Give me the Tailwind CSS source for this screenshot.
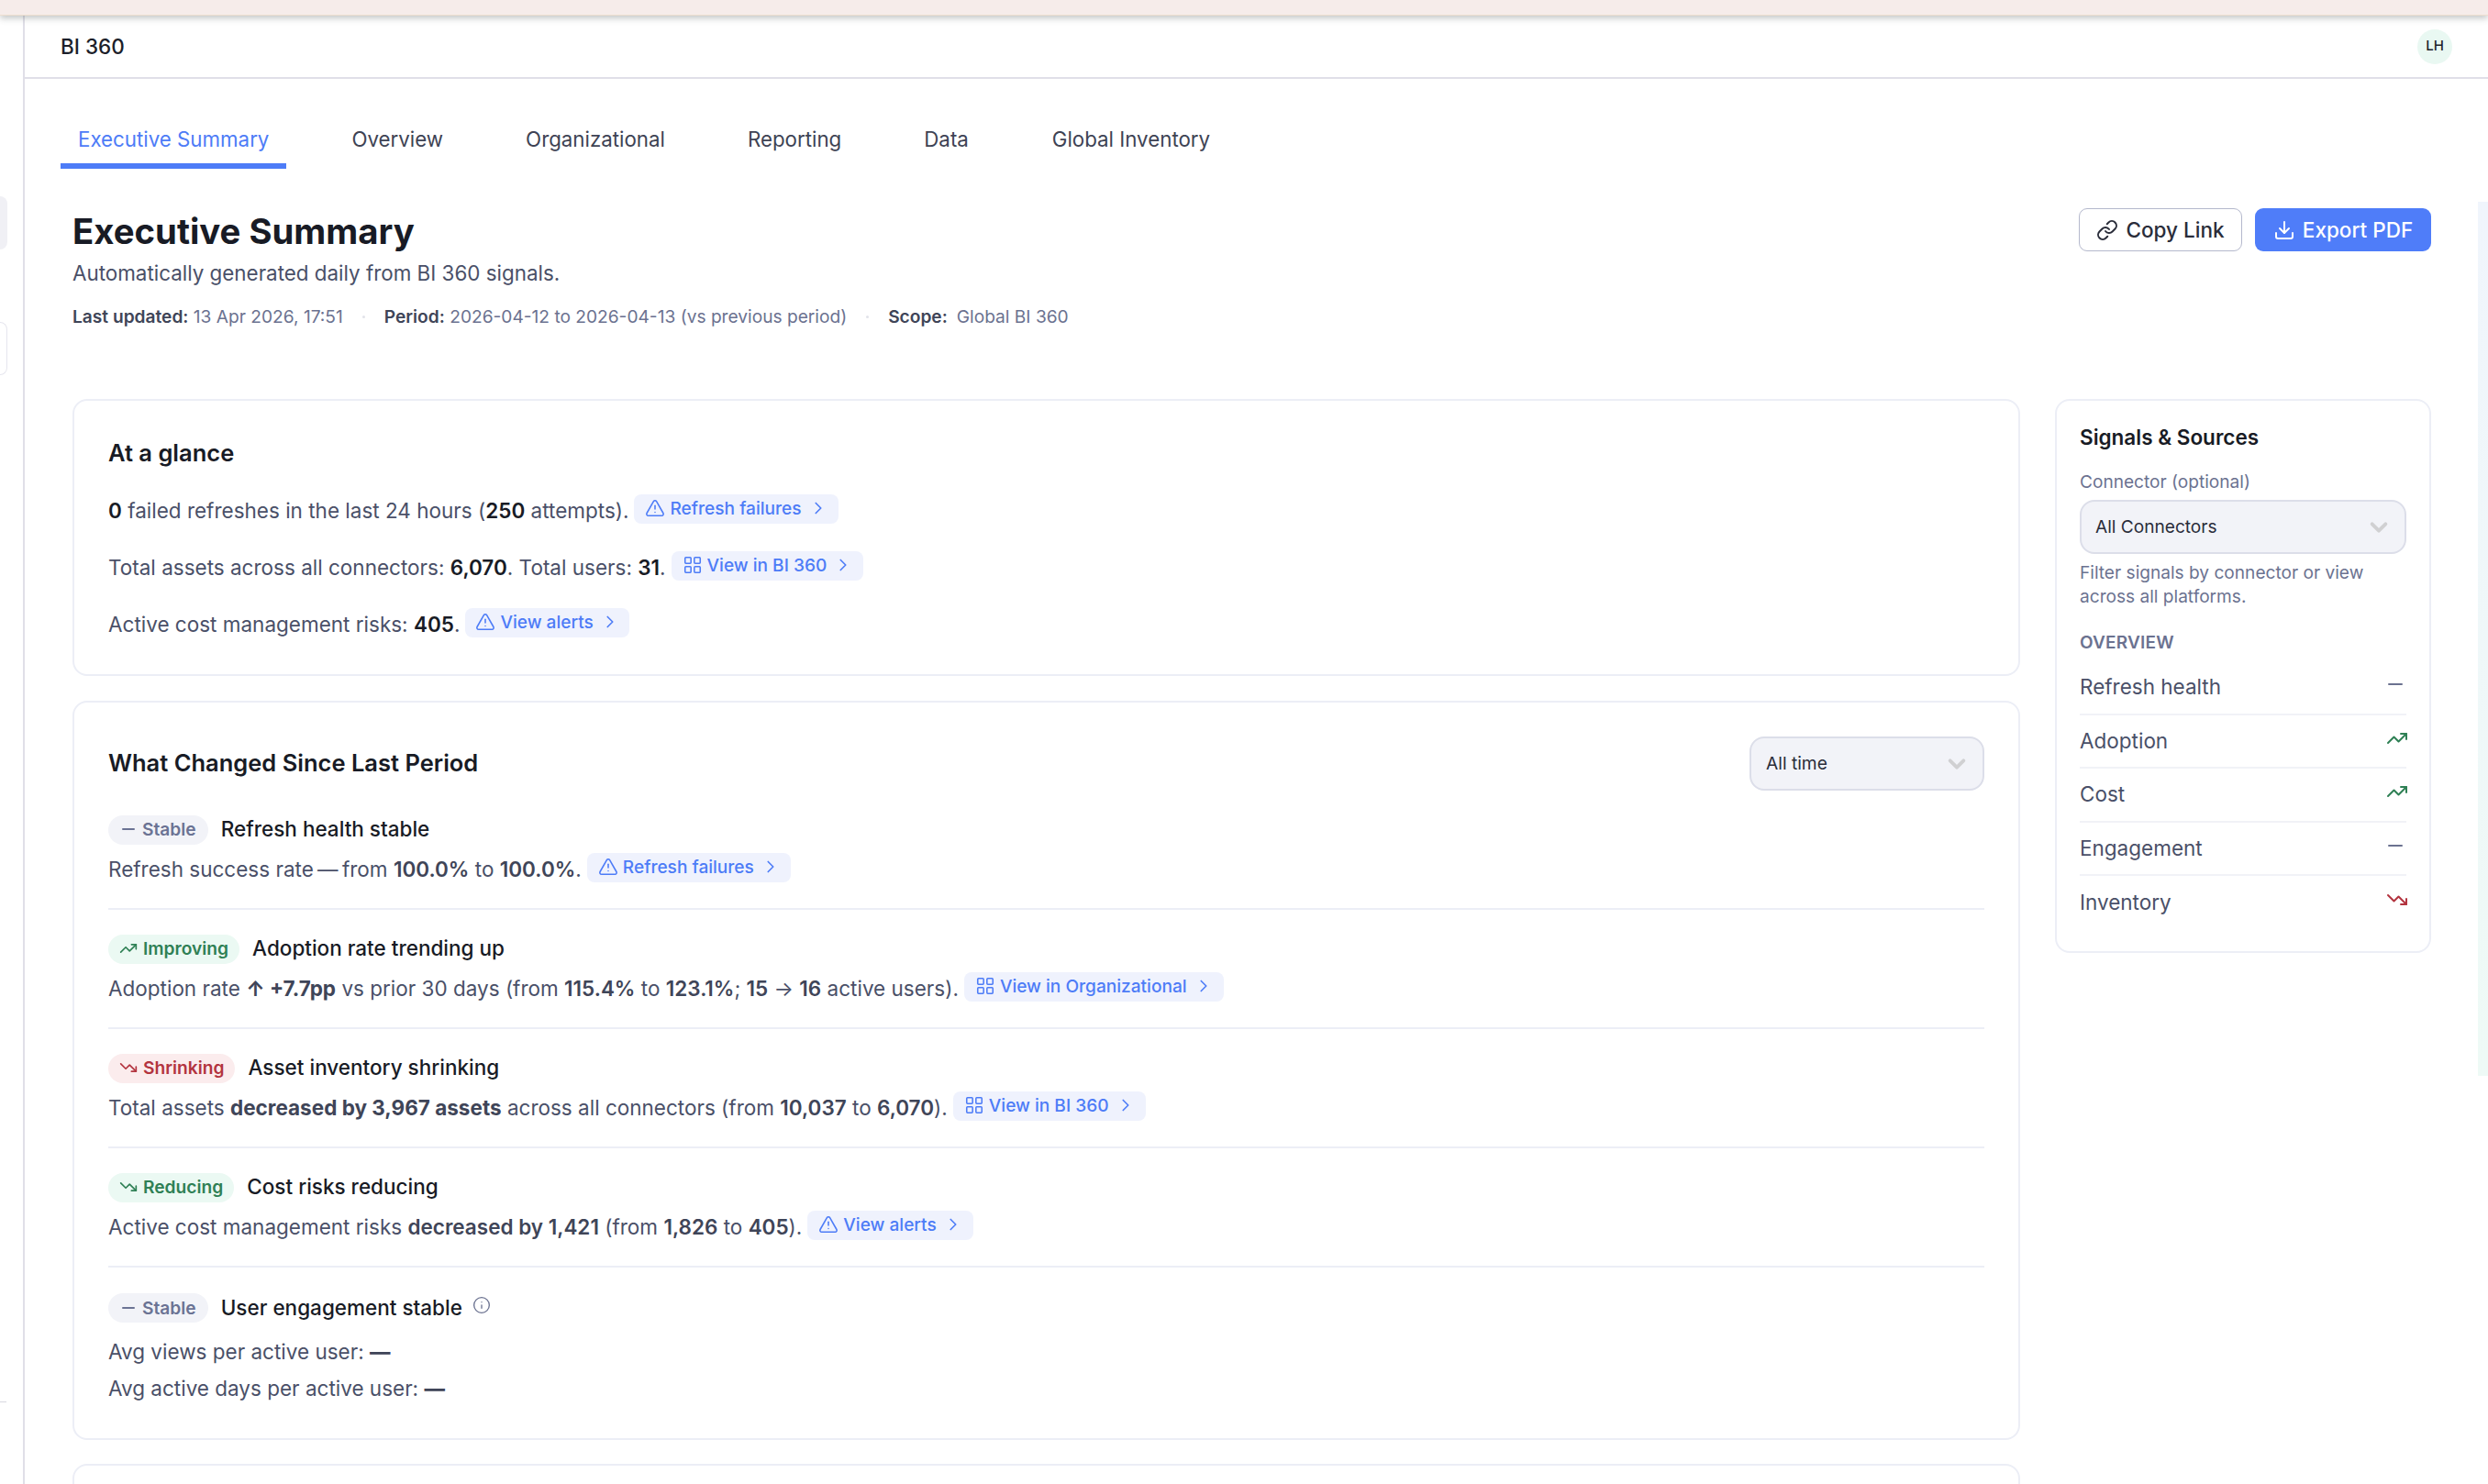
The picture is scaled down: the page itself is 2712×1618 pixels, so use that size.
<!DOCTYPE html>
<html lang="en">

<head>
    <meta charset="UTF-8">
    <meta name="viewport" content="width=device-width, initial-scale=1.0">
    <script src="https://cdn.jsdelivr.net/npm/@tailwindcss/browser@4"></script>
    <title>BI 360 - Executive Summary</title>
</head>

<body class="relative h-[1618px] overflow-hidden bg-white font-[Inter,sans-serif] text-[#4a5068] antialiased">

    <!-- Browser strip -->
    <div class="relative z-10 h-[17px] border-b border-[#eedfd0] bg-[#f6ecea] shadow-[0_3px_7px_rgba(60,70,70,0.3)]"></div>

    <div class="flex">
        <!-- Collapsed rail -->
        <aside class="h-[1601px] w-[27px] shrink-0 border-r-2 border-[#e0dfe8]">
            <div class="mt-[197px] h-[58px] w-[8px] rounded-r-[8px] bg-[#f0f0f5]"></div>
            <div class="mt-[79px] h-[58px] w-[8px] rounded-r-[8px] border border-l-0 border-[#e6e6ee]"></div>
            <div class="mt-[1119px] h-[1px] w-[7px] bg-[#d8d8e0]"></div>
        </aside>

        <div class="min-w-0 flex-1">
            <header class="flex h-[69px] items-center justify-between border-b-2 border-[#e0dfe8] pr-[39px] pl-[39px]">
                <span class="text-[22.5px] font-medium text-[#1c1f2a]">BI 360</span>
                <span class="flex h-[38px] w-[38px] items-center justify-center rounded-full bg-[#e9f8f2] text-[15px] font-medium text-[#1c1f2a]">LH</span>
            </header>

            <!-- Tabs -->
            <nav class="mt-[39px] flex gap-[52px] pl-[39px] text-[22.3px] text-[#3e4354]">
                <a class="h-[59px] border-b-[6px] border-[#4d7cf7] px-[19px] pt-[11px] leading-[32px] text-[#4d7cf7]">Executive Summary</a>
                <a class="h-[59px] px-[19px] pt-[11px] leading-[32px]">Overview</a>
                <a class="h-[59px] px-[19px] pt-[11px] leading-[32px]">Organizational</a>
                <a class="h-[59px] px-[19px] pt-[11px] leading-[32px]">Reporting</a>
                <a class="h-[59px] px-[19px] pt-[11px] leading-[32px]">Data</a>
                <a class="ml-[1px] h-[59px] px-[19px] pt-[11px] leading-[32px]">Global Inventory</a>
            </nav>

            <div class="pr-[62px] pl-[52px]">
                <!-- Page title -->
                <section class="mt-[43px] flex items-start justify-between">
                    <div>
                        <h1 class="mt-[1px] text-[38.3px] leading-[48px] font-bold text-[#181b25]">Executive Summary</h1>
                        <p class="mt-[4px] text-[22.4px] leading-[36px]">Automatically generated daily from BI 360 signals.</p>
                        <div class="mt-[14px] flex items-center gap-[21px] text-[19.15px] leading-[30px] text-[#6b7290]">
                            <span><b class="font-semibold text-[#3f4558]">Last updated:</b> 13 Apr 2026, 17:51</span>
                            <span class="h-[3px] w-[3px] rounded-full bg-[#e2e3ea]"></span>
                            <span><b class="font-semibold text-[#3f4558]">Period:</b> 2026-04-12 to 2026-04-13 (vs previous period)</span>
                            <span class="h-[3px] w-[3px] rounded-full bg-[#e2e3ea]"></span>
                            <span class="flex gap-[10px]"><b class="font-semibold text-[#3f4558]">Scope:</b> Global BI 360</span>
                        </div>
                    </div>
                    <div class="flex gap-[14px]">
                        <button class="flex h-[47px] w-[178px] items-center justify-center gap-[8px] rounded-[9px] border-[1.5px] border-[#b4b8cc] bg-white text-[22.5px] font-medium text-[#2a2d3a]">
                            <svg class="h-[24px] w-[24px]" viewBox="0 0 24 24" fill="none" stroke="currentColor" stroke-width="2" stroke-linecap="round" stroke-linejoin="round"><path d="M10 13a5 5 0 0 0 7.54.54l3-3a5 5 0 0 0-7.07-7.07l-1.72 1.71"/><path d="M14 11a5 5 0 0 0-7.54-.54l-3 3a5 5 0 0 0 7.07 7.07l1.71-1.71"/></svg>
                            Copy Link
                        </button>
                        <button class="flex h-[47px] w-[192px] items-center justify-center gap-[8px] rounded-[9px] bg-[#4f7df9] text-[22.5px] font-medium text-white">
                            <svg class="h-[24px] w-[24px]" viewBox="0 0 24 24" fill="none" stroke="currentColor" stroke-width="2" stroke-linecap="round" stroke-linejoin="round"><path d="M21 15v4a2 2 0 0 1-2 2H5a2 2 0 0 1-2-2v-4"/><polyline points="7 10 12 15 17 10"/><line x1="12" y1="15" x2="12" y2="3"/></svg>
                            Export PDF
                        </button>
                    </div>
                </section>

                <div class="mt-[75px] flex items-start gap-[38px]">
                    <main class="w-[2123px] shrink-0">
                        <!-- At a glance -->
                        <section class="rounded-[16px] border-2 border-[#eceef6] px-[37px] pt-[37px] pb-[36px]">
                            <h2 class="text-[25.5px] leading-[40px] font-semibold text-[#181b25]">At a glance</h2>
                            <div class="mt-[25px] flex flex-col gap-[26px] text-[22.5px]">
                                <div class="flex h-[36px] items-center gap-[6px]">
                                    <span><b class="font-semibold text-[#181b25]">0</b> failed refreshes in the last 24 hours (<b class="font-semibold text-[#181b25]">250</b> attempts).</span>
                                    <a class="mb-[4px] flex h-[32px] items-center gap-[5px] rounded-[8px] bg-[#eff2fd] pr-[11px] pb-[2px] pl-[12px] text-[19.1px] font-medium text-[#4d7cf7]">
                                        <svg class="h-[22px] w-[22px]" viewBox="0 0 24 24" fill="none" stroke="currentColor" stroke-width="1.7" stroke-linecap="round" stroke-linejoin="round"><path d="m21.73 18-8-14a2 2 0 0 0-3.48 0l-8 14A2 2 0 0 0 4 21h16a2 2 0 0 0 1.73-3"/><path d="M12 9v4"/><path d="M12 17h.01"/></svg>
                                        Refresh failures
                                        <svg class="ml-[2px] h-[22px] w-[22px]" viewBox="0 0 24 24" fill="none" stroke="currentColor" stroke-width="1.8" stroke-linecap="round" stroke-linejoin="round"><path d="m9 18 6-6-6-6"/></svg>
                                    </a>
                                </div>
                                <div class="flex h-[36px] items-center gap-[6px]">
                                    <span>Total assets across all connectors: <b class="font-semibold text-[#181b25]">6,070</b>. Total users: <b class="font-semibold text-[#181b25]">31</b>.</span>
                                    <a class="mb-[4px] flex h-[32px] items-center gap-[5px] rounded-[8px] bg-[#eff2fd] pr-[11px] pb-[2px] pl-[12px] text-[19.1px] font-medium text-[#4d7cf7]">
                                        <svg class="h-[22px] w-[22px]" viewBox="0 0 24 24" fill="none" stroke="currentColor" stroke-width="1.7" stroke-linecap="round" stroke-linejoin="round"><rect x="3" y="3" width="7" height="7" rx="1"/><rect x="14" y="3" width="7" height="7" rx="1"/><rect x="14" y="14" width="7" height="7" rx="1"/><rect x="3" y="14" width="7" height="7" rx="1"/></svg>
                                        View in BI 360
                                        <svg class="ml-[2px] h-[22px] w-[22px]" viewBox="0 0 24 24" fill="none" stroke="currentColor" stroke-width="1.8" stroke-linecap="round" stroke-linejoin="round"><path d="m9 18 6-6-6-6"/></svg>
                                    </a>
                                </div>
                                <div class="flex h-[36px] items-center gap-[6px]">
                                    <span>Active cost management risks: <b class="font-semibold text-[#181b25]">405</b>.</span>
                                    <a class="mb-[4px] flex h-[32px] items-center gap-[5px] rounded-[8px] bg-[#eff2fd] pr-[10px] pb-[2px] pl-[11px] text-[19.1px] font-medium text-[#4d7cf7]">
                                        <svg class="h-[22px] w-[22px]" viewBox="0 0 24 24" fill="none" stroke="currentColor" stroke-width="1.7" stroke-linecap="round" stroke-linejoin="round"><path d="m21.73 18-8-14a2 2 0 0 0-3.48 0l-8 14A2 2 0 0 0 4 21h16a2 2 0 0 0 1.73-3"/><path d="M12 9v4"/><path d="M12 17h.01"/></svg>
                                        View alerts
                                        <svg class="ml-[2px] h-[22px] w-[22px]" viewBox="0 0 24 24" fill="none" stroke="currentColor" stroke-width="1.8" stroke-linecap="round" stroke-linejoin="round"><path d="m9 18 6-6-6-6"/></svg>
                                    </a>
                                </div>
                            </div>
                        </section>

                        <!-- What changed -->
                        <section class="mt-[27px] rounded-[16px] border-2 border-[#eceef6] px-[37px] pt-[37px] pb-[34px] text-[22.5px]">
                            <div class="flex h-[59px] items-center justify-between">
                                <h2 class="text-[25.5px] font-semibold text-[#181b25]">What Changed Since Last Period</h2>
                                <div class="flex h-[59px] w-[256px] items-center justify-between rounded-[16px] border-2 border-[#dcdee9] bg-[#f2f3f8] pr-[17px] pl-[16px] text-[19.2px] text-[#2a2d3a]">
                                    All time
                                    <svg class="h-[22px] w-[22px] text-[#d0d0d2]" viewBox="0 0 24 24" fill="none" stroke="currentColor" stroke-width="4.2" stroke-linecap="round" stroke-linejoin="round"><path d="M4 8 12 16 20 8"/></svg>
                                </div>
                            </div>

                            <!-- Refresh -->
                            <div class="mt-[27px] border-b-2 border-[#eceef6] pb-[24px]">
                                <div class="flex h-[32px] items-center gap-[14px]">
                                    <span class="flex h-[32px] items-center gap-[8px] rounded-full bg-[#f2f3f8] pr-[13px] pb-[2px] pl-[15px] text-[19.2px] font-semibold text-[#6b7394]">
                                        <svg class="h-[14px] w-[14px]" viewBox="0 0 14 14" fill="none" stroke="currentColor" stroke-width="2" stroke-linecap="round"><path d="M1 7h12"/></svg>
                                        Stable
                                    </span>
                                    <span class="mb-[2px] font-medium text-[#181b25]">Refresh health stable</span>
                                </div>
                                <div class="mt-[9px] flex h-[36px] items-center gap-[6px]">
                                    <span>Refresh success rate <span class="-mx-[2px]">—</span> from <b class="font-semibold text-[#3f4558]">100.0%</b> to <b class="font-semibold text-[#3f4558]">100.0%</b>.</span>
                                    <a class="mb-[4px] flex h-[32px] items-center gap-[5px] rounded-[8px] bg-[#eff2fd] pr-[11px] pb-[2px] pl-[12px] text-[19.1px] font-medium text-[#4d7cf7]">
                                        <svg class="h-[22px] w-[22px]" viewBox="0 0 24 24" fill="none" stroke="currentColor" stroke-width="1.7" stroke-linecap="round" stroke-linejoin="round"><path d="m21.73 18-8-14a2 2 0 0 0-3.48 0l-8 14A2 2 0 0 0 4 21h16a2 2 0 0 0 1.73-3"/><path d="M12 9v4"/><path d="M12 17h.01"/></svg>
                                        Refresh failures
                                        <svg class="ml-[2px] h-[22px] w-[22px]" viewBox="0 0 24 24" fill="none" stroke="currentColor" stroke-width="1.8" stroke-linecap="round" stroke-linejoin="round"><path d="m9 18 6-6-6-6"/></svg>
                                    </a>
                                </div>
                            </div>

                            <!-- Adoption -->
                            <div class="mt-[27px] border-b-2 border-[#eceef6] pb-[24px]">
                                <div class="flex h-[32px] items-center gap-[14px]">
                                    <span class="flex h-[32px] items-center gap-[6px] rounded-full bg-[#ebf9f3] pr-[12px] pb-[2px] pl-[12px] text-[19.2px] font-semibold text-[#2f8055]">
                                        <svg class="h-[20px] w-[20px]" viewBox="0 0 24 24" fill="none" stroke="currentColor" stroke-width="2" stroke-linecap="round" stroke-linejoin="round"><polyline points="22 7 13.5 15.5 8.5 10.5 2 17"/><polyline points="16 7 22 7 22 13"/></svg>
                                        Improving
                                    </span>
                                    <span class="mb-[2px] font-medium text-[#181b25]">Adoption rate trending up</span>
                                </div>
                                <div class="mt-[9px] flex h-[36px] items-center gap-[6px]">
                                    <span>Adoption rate <b class="font-bold text-[#3f4558]">↑ +7.7pp</b> vs prior 30 days (from <b class="font-semibold text-[#3f4558]">115.4%</b> to <b class="font-semibold text-[#3f4558]">123.1%</b>; <b class="font-semibold text-[#3f4558]">15</b> → <b class="font-semibold text-[#3f4558]">16</b> active users).</span>
                                    <a class="mb-[4px] flex h-[32px] items-center gap-[5px] rounded-[8px] bg-[#eff2fd] pr-[11px] pb-[2px] pl-[12px] text-[19.1px] font-medium text-[#4d7cf7]">
                                        <svg class="h-[22px] w-[22px]" viewBox="0 0 24 24" fill="none" stroke="currentColor" stroke-width="1.7" stroke-linecap="round" stroke-linejoin="round"><rect x="3" y="3" width="7" height="7" rx="1"/><rect x="14" y="3" width="7" height="7" rx="1"/><rect x="14" y="14" width="7" height="7" rx="1"/><rect x="3" y="14" width="7" height="7" rx="1"/></svg>
                                        View in Organizational
                                        <svg class="ml-[2px] h-[22px] w-[22px]" viewBox="0 0 24 24" fill="none" stroke="currentColor" stroke-width="1.8" stroke-linecap="round" stroke-linejoin="round"><path d="m9 18 6-6-6-6"/></svg>
                                    </a>
                                </div>
                            </div>

                            <!-- Inventory -->
                            <div class="mt-[27px] border-b-2 border-[#eceef6] pb-[24px]">
                                <div class="flex h-[32px] items-center gap-[14px]">
                                    <span class="flex h-[32px] items-center gap-[6px] rounded-full bg-[#fbeced] pr-[12px] pb-[2px] pl-[12px] text-[19.2px] font-semibold text-[#b3343f]">
                                        <svg class="h-[20px] w-[20px]" viewBox="0 0 24 24" fill="none" stroke="currentColor" stroke-width="2" stroke-linecap="round" stroke-linejoin="round"><polyline points="22 17 13.5 8.5 8.5 13.5 2 7"/><polyline points="16 17 22 17 22 11"/></svg>
                                        Shrinking
                                    </span>
                                    <span class="mb-[2px] font-medium text-[#181b25]">Asset inventory shrinking</span>
                                </div>
                                <div class="mt-[9px] flex h-[36px] items-center gap-[6px]">
                                    <span>Total assets <b class="font-bold text-[#3f4558]">decreased by 3,967 assets</b> across all connectors (from <b class="font-semibold text-[#3f4558]">10,037</b> to <b class="font-semibold text-[#3f4558]">6,070</b>).</span>
                                    <a class="mb-[4px] flex h-[32px] items-center gap-[5px] rounded-[8px] bg-[#eff2fd] pr-[11px] pb-[2px] pl-[12px] text-[19.1px] font-medium text-[#4d7cf7]">
                                        <svg class="h-[22px] w-[22px]" viewBox="0 0 24 24" fill="none" stroke="currentColor" stroke-width="1.7" stroke-linecap="round" stroke-linejoin="round"><rect x="3" y="3" width="7" height="7" rx="1"/><rect x="14" y="3" width="7" height="7" rx="1"/><rect x="14" y="14" width="7" height="7" rx="1"/><rect x="3" y="14" width="7" height="7" rx="1"/></svg>
                                        View in BI 360
                                        <svg class="ml-[2px] h-[22px] w-[22px]" viewBox="0 0 24 24" fill="none" stroke="currentColor" stroke-width="1.8" stroke-linecap="round" stroke-linejoin="round"><path d="m9 18 6-6-6-6"/></svg>
                                    </a>
                                </div>
                            </div>

                            <!-- Cost -->
                            <div class="mt-[27px] border-b-2 border-[#eceef6] pb-[24px]">
                                <div class="flex h-[32px] items-center gap-[14px]">
                                    <span class="flex h-[32px] items-center gap-[6px] rounded-full bg-[#ebf9f3] pr-[12px] pb-[2px] pl-[12px] text-[19.2px] font-semibold text-[#2f8055]">
                                        <svg class="h-[20px] w-[20px]" viewBox="0 0 24 24" fill="none" stroke="currentColor" stroke-width="2" stroke-linecap="round" stroke-linejoin="round"><polyline points="22 17 13.5 8.5 8.5 13.5 2 7"/><polyline points="16 17 22 17 22 11"/></svg>
                                        Reducing
                                    </span>
                                    <span class="mb-[2px] font-medium text-[#181b25]">Cost risks reducing</span>
                                </div>
                                <div class="mt-[9px] flex h-[36px] items-center gap-[6px]">
                                    <span>Active cost management risks <b class="font-semibold text-[#3f4558]">decreased by 1,421</b> (from <b class="font-semibold text-[#3f4558]">1,826</b> to <b class="font-semibold text-[#3f4558]">405</b>).</span>
                                    <a class="mb-[4px] flex h-[32px] items-center gap-[5px] rounded-[8px] bg-[#eff2fd] pr-[11px] pb-[2px] pl-[12px] text-[19.1px] font-medium text-[#4d7cf7]">
                                        <svg class="h-[22px] w-[22px]" viewBox="0 0 24 24" fill="none" stroke="currentColor" stroke-width="1.7" stroke-linecap="round" stroke-linejoin="round"><path d="m21.73 18-8-14a2 2 0 0 0-3.48 0l-8 14A2 2 0 0 0 4 21h16a2 2 0 0 0 1.73-3"/><path d="M12 9v4"/><path d="M12 17h.01"/></svg>
                                        View alerts
                                        <svg class="ml-[2px] h-[22px] w-[22px]" viewBox="0 0 24 24" fill="none" stroke="currentColor" stroke-width="1.8" stroke-linecap="round" stroke-linejoin="round"><path d="m9 18 6-6-6-6"/></svg>
                                    </a>
                                </div>
                            </div>

                            <!-- Engagement -->
                            <div class="mt-[28px]">
                                <div class="flex h-[32px] items-center gap-[14px]">
                                    <span class="flex h-[32px] items-center gap-[8px] rounded-full bg-[#f2f3f8] pr-[13px] pl-[15px] text-[19.2px] font-semibold text-[#6b7394]">
                                        <svg class="h-[14px] w-[14px]" viewBox="0 0 14 14" fill="none" stroke="currentColor" stroke-width="2" stroke-linecap="round"><path d="M1 7h12"/></svg>
                                        Stable
                                    </span>
                                    <span class="font-medium text-[#181b25]">User engagement stable</span>
                                    <svg class="-ml-[3px] mb-[6px] h-[20px] w-[20px] text-[#6b7290]" viewBox="0 0 24 24" fill="none" stroke="currentColor" stroke-width="1.6" stroke-linecap="round" stroke-linejoin="round"><circle cx="12" cy="12" r="10"/><path d="M12 16v-4"/><path d="M12 8h.01"/></svg>
                                </div>
                                <p class="mt-[12px] leading-[40px]">Avg views per active user: <b class="font-bold text-[#3f4558]">—</b></p>
                                <p class="leading-[40px]">Avg active days per active user: <b class="font-bold text-[#3f4558]">—</b></p>
                            </div>
                        </section>

                        <section class="mt-[26px] h-[200px] rounded-[16px] border-2 border-[#eceef6]"></section>
                    </main>

                    <!-- Signals & Sources -->
                    <aside class="w-[410px] shrink-0 rounded-[16px] border-2 border-[#eceef6] px-[25px] pt-[24px] pb-[25px]">
                        <h3 class="text-[22.5px] leading-[32px] font-semibold text-[#181b25]">Signals &amp; Sources</h3>
                        <p class="mt-[18px] text-[19.1px] leading-[28px] text-[#6b7290]">Connector (optional)</p>
                        <div class="mt-[6px] flex h-[59px] items-center justify-between rounded-[16px] border-2 border-[#dcdee9] bg-[#f2f3f8] pr-[17px] pl-[15px] text-[19.1px] text-[#2a2d3a]">
                            All Connectors
                            <svg class="h-[22px] w-[22px] text-[#d0d0d2]" viewBox="0 0 24 24" fill="none" stroke="currentColor" stroke-width="4.2" stroke-linecap="round" stroke-linejoin="round"><path d="M4 8 12 16 20 8"/></svg>
                        </div>
                        <p class="mt-[7px] text-[19.1px] leading-[26px] text-[#6b7290]">Filter signals by connector or view across all platforms.</p>
                        <p class="mt-[28px] text-[19px] leading-[20px] font-semibold tracking-[0.01em] text-[#6b7290]">OVERVIEW</p>
                        <ul class="mt-[10px] text-[22.5px] text-[#4a5068]">
                            <li class="flex h-[58.5px] items-center justify-between border-b-2 border-[#f1f2f7]">
                                Refresh health
                                <svg class="mb-[6px] h-[24px] w-[24px] text-[#6b7290]" viewBox="0 0 24 24" fill="none" stroke="currentColor" stroke-width="2" stroke-linecap="round"><path d="M5 12h14"/></svg>
                            </li>
                            <li class="flex h-[58.5px] items-center justify-between border-b-2 border-[#f1f2f7]">
                                Adoption
                                <svg class="mb-[6px] -mr-[2px] h-[24px] w-[24px] text-[#2f8055]" viewBox="0 0 24 24" fill="none" stroke="currentColor" stroke-width="2" stroke-linecap="round" stroke-linejoin="round"><polyline points="22 7 13.5 15.5 8.5 10.5 2 17"/><polyline points="16 7 22 7 22 13"/></svg>
                            </li>
                            <li class="flex h-[58.5px] items-center justify-between border-b-2 border-[#f1f2f7]">
                                Cost
                                <svg class="mb-[6px] -mr-[2px] h-[24px] w-[24px] text-[#2f8055]" viewBox="0 0 24 24" fill="none" stroke="currentColor" stroke-width="2" stroke-linecap="round" stroke-linejoin="round"><polyline points="22 7 13.5 15.5 8.5 10.5 2 17"/><polyline points="16 7 22 7 22 13"/></svg>
                            </li>
                            <li class="flex h-[58.5px] items-center justify-between border-b-2 border-[#f1f2f7]">
                                Engagement
                                <svg class="mb-[6px] h-[24px] w-[24px] text-[#6b7290]" viewBox="0 0 24 24" fill="none" stroke="currentColor" stroke-width="2" stroke-linecap="round"><path d="M5 12h14"/></svg>
                            </li>
                            <li class="flex h-[57px] items-center justify-between">
                                Inventory
                                <svg class="mb-[6px] -mr-[2px] h-[24px] w-[24px] text-[#b3343f]" viewBox="0 0 24 24" fill="none" stroke="currentColor" stroke-width="2" stroke-linecap="round" stroke-linejoin="round"><polyline points="22 17 13.5 8.5 8.5 13.5 2 7"/><polyline points="16 17 22 17 22 11"/></svg>
                            </li>
                        </ul>
                    </aside>
                </div>
            </div>
        </div>
    </div>

    <!-- Scroll hint on the right edge -->
    <div class="absolute top-[220px] right-0 h-[953px] w-[11px] bg-gradient-to-b from-[#f0f5fc] to-[#eefaf6]"></div>

</body>

</html>
